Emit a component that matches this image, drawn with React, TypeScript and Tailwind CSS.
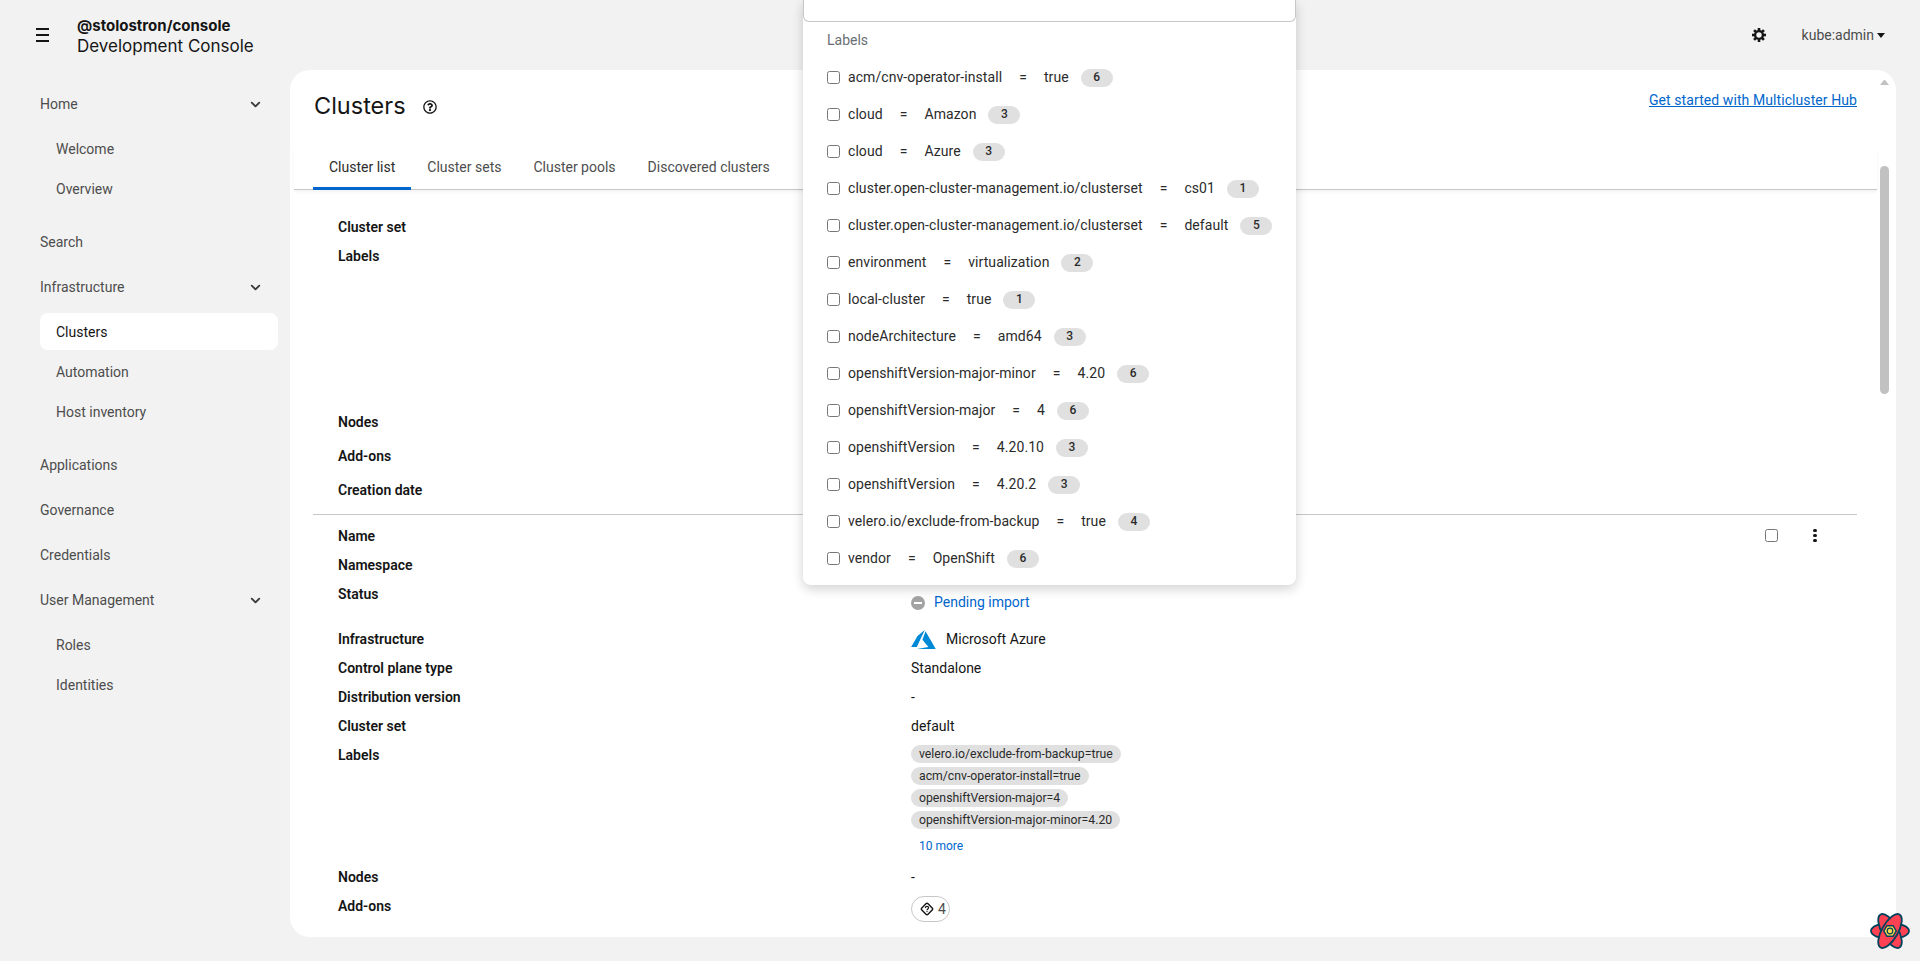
import React from "react";
import { FaRegQuestionCircle } from "react-icons/fa";
import { ChevronDown } from "lucide-react";

const navItems = [
  { label: "Home", children: ["Welcome", "Overview"] },
  { label: "Search" },
  { label: "Infrastructure", children: ["Clusters", "Automation", "Host inventory"] },
  { label: "Applications" },
  { label: "Governance" },
  { label: "Credentials" },
  { label: "User Management", children: ["Roles", "Identities"] },
];

const labelOptions = [
  ["acm/cnv-operator-install", "true", 6],
  ["cloud", "Amazon", 3],
  ["cloud", "Azure", 3],
  ["cluster.open-cluster-management.io/clusterset", "cs01", 1],
  ["cluster.open-cluster-management.io/clusterset", "default", 5],
  ["environment", "virtualization", 2],
  ["local-cluster", "true", 1],
  ["nodeArchitecture", "amd64", 3],
  ["openshiftVersion-major-minor", "4.20", 6],
  ["openshiftVersion-major", "4", 6],
  ["openshiftVersion", "4.20.10", 3],
  ["openshiftVersion", "4.20.2", 3],
  ["velero.io/exclude-from-backup", "true", 4],
  ["vendor", "OpenShift", 6],
];

const clusterLabels = [
  "velero.io/exclude-from-backup=true",
  "acm/cnv-operator-install=true",
  "openshiftVersion-major=4",
  "openshiftVersion-major-minor=4.20",
];

function AzureLogo() {
  return (
    <svg viewBox="0 0 19.68 15.24" className="w-[25px] h-[19px]" fill="#0089d6">
      <path d="M9.105 14.43l4.642-.82.043-.01-2.387-2.84a403.945 403.945 0 0 1-2.387-2.853c0-.014 2.465-6.802 2.479-6.826.004-.008 1.682 2.888 4.066 7.02l4.09 7.09.031.054-7.587-.001-7.587-.001 4.597-.812zM0 13.566c0-.004 1.125-1.957 2.5-4.34L5 4.893l2.913-2.445C9.515 1.104 10.83.002 10.836 0a.512.512 0 0 1-.047.118L7.625 6.903l-3.107 6.663-2.259.003c-1.242.002-2.259 0-2.259-.003z" />
    </svg>
  );
}

function GearIcon() {
  return (
    <svg viewBox="0 0 14 14" className="w-[14px] h-[14px]" fill="#151515">
      {[0, 45, 90, 135, 180, 225, 270, 315].map((deg) => (
        <rect key={deg} x="5.7" y="0" width="2.6" height="3" transform={`rotate(${deg} 7 7)`} />
      ))}
      <circle cx="7" cy="7" r="3.9" fill="none" stroke="#151515" strokeWidth="2.4" />
    </svg>
  );
}

function AddonIcon() {
  return (
    <svg viewBox="0 0 14 14" className="w-[14px] h-[14px]" fill="none" stroke="#151515">
      <rect x="2.6" y="2.6" width="8.8" height="8.8" rx="1.5" strokeWidth="1.4" transform="rotate(45 7 7)" />
      <path d="M5.4 5.9c0-2 3.2-2 3.2-.1 0 1.2-1.6 1.2-1.6 2.5" strokeWidth="1.2" />
      <circle cx="7" cy="9.6" r="0.7" fill="#151515" stroke="none" />
    </svg>
  );
}

function AtomLogo() {
  return (
    <svg viewBox="0 0 40 36" className="w-[40px] h-[36px]">
      <g fill="#ff4154" stroke="#00435b" strokeWidth="1.8">
        <ellipse cx="20" cy="18" rx="19" ry="8" />
        <ellipse cx="20" cy="18" rx="19" ry="8" transform="rotate(60 20 18)" />
        <ellipse cx="20" cy="18" rx="19" ry="8" transform="rotate(120 20 18)" />
      </g>
      <polygon points="13,18 16.5,12 23.5,12 27,18 23.5,24 16.5,24" fill="#00435b" />
      <polygon points="14.6,18 17.3,13.4 22.7,13.4 25.4,18 22.7,22.6 17.3,22.6" fill="#ffd94c" />
      <circle cx="20" cy="18" r="2.8" fill="#ffd94c" stroke="#00435b" strokeWidth="1.2" />
    </svg>
  );
}

function Row({ term, h, children }: { term: string; h: string; children?: React.ReactNode }) {
  return (
    <div className={`grid grid-cols-[573px_1fr] ${h}`}>
      <div className="font-semibold text-[#151515]">{term}</div>
      <div>{children}</div>
    </div>
  );
}

function Sidebar() {
  return (
    <nav className="w-[290px] shrink-0 pl-[40px] pr-[12px] pt-[15px] flex flex-col gap-[8px] text-[#4d4d4d]">
      {navItems.map((item) => (
        <div key={item.label}>
          <div className="h-[37px] pt-[2px] flex items-center justify-between pr-[15px]">
            <span>{item.label}</span>
            {item.children && <ChevronDown size={15} strokeWidth={3} className="text-[#3a3a3a]" />}
          </div>
          {item.children && (
            <div className="flex flex-col gap-[3px] py-[8px]">
              {item.children.map((child) => (
                <div
                  key={child}
                  className={`h-[37px] pt-[2px] flex items-center px-[16px] rounded-[8px] ${child === "Clusters" ? "bg-white text-[#151515]" : ""}`}
                >
                  {child}
                </div>
              ))}
            </div>
          )}
        </div>
      ))}
    </nav>
  );
}

function LabelDropdown() {
  return (
    <div className="absolute left-[803px] top-0 w-[493px] h-[585px] bg-white rounded-b-[8px] shadow-[0_4px_12px_rgba(0,0,0,0.18)] z-10">
      <div className="h-[22px] border border-t-0 border-[#c7c7c7] rounded-b-[6px]" />
      <div className="h-[37px] pl-[24px] pt-[8px] text-[#6a6e73]">Labels</div>
      {labelOptions.map(([key, value, count], i) => (
        <div key={i} className="h-[37px] flex items-center pl-[24px] text-[#2b2b2b] tracking-[0.07px]">
          <input type="checkbox" className="w-[13px] h-[13px] mr-[8px]" />
          <span>{key}</span>
          <span className="mx-[17px]">=</span>
          <span>{value}</span>
          <span className="ml-[12px] w-[32px] h-[18px] rounded-full bg-[#e0e0e0] flex items-center justify-center text-[12px] font-medium">
            {count}
          </span>
        </div>
      ))}
    </div>
  );
}

export default function App() {
  return (
    <div className="relative h-screen overflow-hidden flex flex-col bg-[#f2f2f2] text-[14px] leading-[21px] text-[#151515] font-[family-name:Roboto]">
      <header className="h-[70px] shrink-0 flex items-center">
        <div className="ml-[36px] w-[13px] flex flex-col gap-[4px]">
          <span className="h-[2px] bg-[#151515]" />
          <span className="h-[2px] bg-[#151515]" />
          <span className="h-[2px] bg-[#151515]" />
        </div>
        <div className="ml-[28px] mt-[2px] font-[family-name:Inter]">
          <div className="text-[15px] leading-[21px] font-bold">@stolostron/console</div>
          <div className="text-[17px] leading-[21px]">Development Console</div>
        </div>
        <div className="ml-auto flex items-center mr-[35px]">
          <GearIcon />
          <span className="ml-[36px] text-[#4d4d4d]">kube:admin</span>
          <span className="ml-[3px] border-x-[4px] border-t-[5px] border-x-transparent border-t-[#151515]" />
        </div>
      </header>
      <div className="flex-1 min-h-0 flex">
        <Sidebar />
        <main className="flex-1 min-w-0 mr-[24px] mb-[24px] bg-white rounded-[20px] overflow-hidden flex">
          <div className="flex-1 min-w-0 flex flex-col">
            <div className="h-[78px] flex items-start justify-between pl-[24px] pr-[20px] pt-[18px]">
              <div className="flex items-center">
                <h1 className="text-[23.5px] leading-[36px] font-[family-name:Inter]">Clusters</h1>
                <FaRegQuestionCircle size={14} className="ml-[17px] mt-[2px]" />
              </div>
              <a className="text-[#0066cc] underline mt-[2px] tracking-[0.08px]">Get started with Multicluster Hub</a>
            </div>
            <div className="ml-[4px] h-[42px] pl-[19px] flex border-b border-[#c7c7c7] shadow-[0_2px_3px_rgba(0,0,0,0.05)] text-[#4d4d4d]">
              <div className="h-[42px] px-[16px] pt-[9px] border-b-[3px] border-[#0066cc] text-[#2b2b2b]">Cluster list</div>
              <div className="px-[16px] pt-[9px]">Cluster sets</div>
              <div className="px-[16px] pt-[9px]">Cluster pools</div>
              <div className="px-[16px] pt-[9px]">Discovered clusters</div>
            </div>
            <div className="pl-[23px] pr-[20px] pt-[27px]">
              <div className="pl-[25px] pb-[13px]">
                <Row term="Cluster set" h="h-[29px]" />
                <Row term="Labels" h="h-[166px]" />
                <Row term="Nodes" h="h-[34px]" />
                <Row term="Add-ons" h="h-[34px]" />
                <Row term="Creation date" h="h-[21px]" />
              </div>
              <div className="border-t border-[#c7c7c7] pl-[25px] pt-[11px] relative">
                <div className="absolute right-[40px] top-[14px] flex items-center">
                  <input type="checkbox" className="w-[13px] h-[13px]" />
                  <div className="ml-[35px] flex flex-col gap-[2px]">
                    <span className="w-[4px] h-[3px] rounded-full bg-[#151515]" />
                    <span className="w-[4px] h-[3px] rounded-full bg-[#151515]" />
                    <span className="w-[4px] h-[3px] rounded-full bg-[#151515]" />
                  </div>
                </div>
                <Row term="Name" h="h-[29px]" />
                <Row term="Namespace" h="h-[29px]" />
                <Row term="Status" h="h-[45px]">
                  <div className="mt-[8px] flex items-center text-[#0066cc]">
                    <span className="w-[14px] h-[14px] rounded-full bg-[#a3a3a3] flex items-center justify-center">
                      <span className="w-[8px] h-[2px] bg-white" />
                    </span>
                    <span className="ml-[9px]">Pending import</span>
                  </div>
                </Row>
                <Row term="Infrastructure" h="h-[29px]">
                  <div className="flex items-center">
                    <AzureLogo />
                    <span className="ml-[10px]">Microsoft Azure</span>
                  </div>
                </Row>
                <Row term="Control plane type" h="h-[29px]">Standalone</Row>
                <Row term="Distribution version" h="h-[29px]">-</Row>
                <Row term="Cluster set" h="h-[29px]">default</Row>
                <Row term="Labels" h="h-[122px]">
                  <div className="flex flex-col items-start gap-[4px]">
                    {clusterLabels.map((label) => (
                      <span key={label} className="h-[18px] px-[8px] rounded-full bg-[#e0e0e0] text-[12.25px] leading-[18px] text-[#2b2b2b]">
                        {label}
                      </span>
                    ))}
                    <span className="mt-[3px] ml-[8px] text-[12px] leading-[20px] text-[#0066cc]">10 more</span>
                  </div>
                </Row>
                <Row term="Nodes" h="h-[29px]">-</Row>
                <Row term="Add-ons" h="h-[29px]">
                  <span className="inline-flex items-center w-[39px] h-[26px] pl-[8px] rounded-full border border-[#c7c7c7] gap-[4px] text-[#4d4d4d]">
                    <AddonIcon />4
                  </span>
                </Row>
              </div>
            </div>
          </div>
          <div className="w-[19px] shrink-0 pl-[3px] pr-[7px] pt-[10px] flex flex-col items-stretch">
            <span className="border-x-[4.5px] border-b-[5px] border-x-transparent border-b-[#c1c1c1]" />
            <span className="mt-[81px] h-[228px] rounded-full bg-[#c1c1c1]" />
          </div>
        </main>
      </div>
      <LabelDropdown />
      <div className="absolute left-[1870px] top-[913px] z-20">
        <AtomLogo />
      </div>
    </div>
  );
}
